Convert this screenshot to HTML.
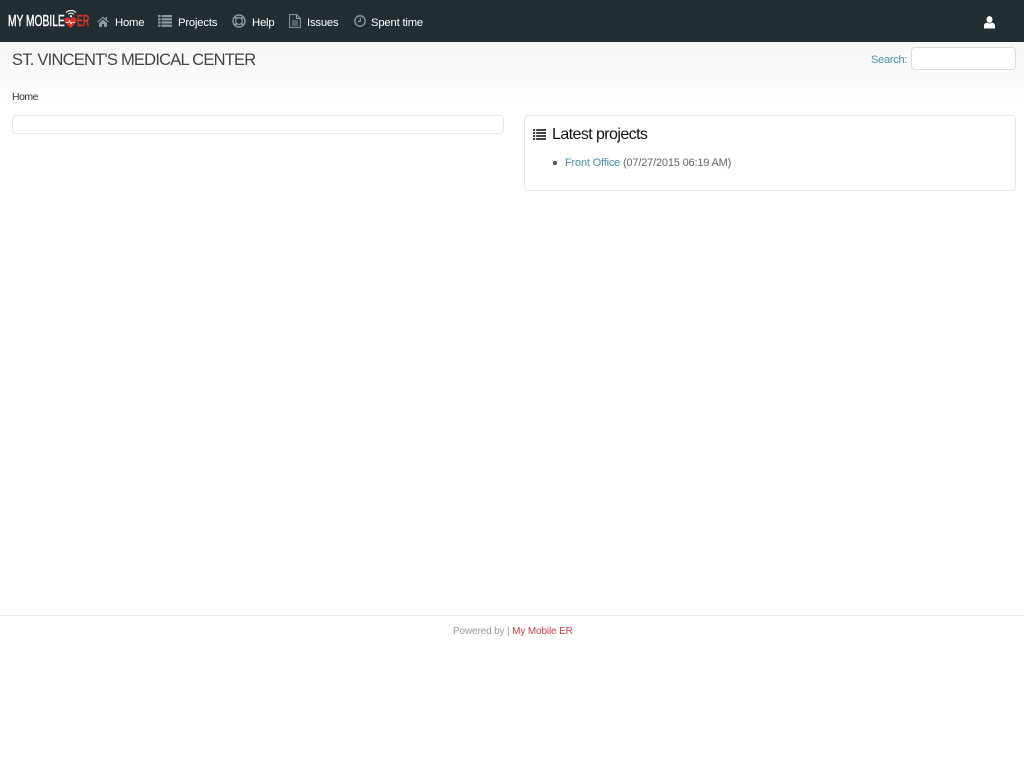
<!DOCTYPE html>
<html><head><meta charset="utf-8"><title>St. Vincent's Medical Center</title>
<style>
html,body{margin:0;padding:0;background:#fff;width:1024px;height:768px;overflow:hidden;font-family:"Liberation Sans",sans-serif;font-size:12px;color:#555}
.a{position:absolute;white-space:nowrap}
#nav{position:absolute;left:0;top:0;width:1024px;height:42px;background:#222e32}
#hd{position:absolute;left:0;top:42px;width:1024px;height:58px;background:linear-gradient(#f8f8f8,#fafafa 60%,#fff)}
.m{color:#fff;font-size:11.3px;top:16px;line-height:14px;letter-spacing:-.2px}
.logo{font-size:16px;line-height:16px;top:14px;transform-origin:0 0;-webkit-text-stroke:.4px currentColor}
svg{position:absolute;overflow:visible}
.box{position:absolute;background:#fff;border:1px solid #e8e8e8;border-radius:4px;box-sizing:border-box}
</style></head><body>
<div id="nav"></div>
<div id="hd"></div>

<div class="a logo" style="left:8px;color:#fff;transform:scaleX(.64)">MY MOBILE</div>
<div class="a logo" style="left:77px;color:#e0352b;transform:scaleX(.55);-webkit-text-stroke:.6px #e0352b">ER</div>
<svg style="left:64px;top:16px" width="13" height="13" viewBox="0 0 14 13"><path d="M7 12.500L1 6.500C-.5 4.500 .8 1 3.600 1 5.200 1 6.400 1.800 7 3 7.600 1.800 8.800 1 10.400 1 13.200 1 14.500 4.500 13 6.500Z" fill="#d9342b"/><path d="M2 6.500h3l1-2 1.500 3.500 1-1.500h3" stroke="#fff" stroke-width=".8" fill="none"/></svg>
<svg style="left:65px;top:9px" width="12" height="9" viewBox="0 0 12 9"><path d="M1 3.500C4 .8 8 .8 11 3.500M3 5.300C5 3.700 7 3.700 9 5.300" stroke="#e6e6e6" stroke-width="1.200" fill="none"/><circle cx="6" cy="7.300" r="1.200" fill="#e6e6e6"/></svg>

<svg style="left:97px;top:16px" width="12" height="11" viewBox="0 0 12 11"><path d="M0 5.800L6 .5 8.500 2.700V1h1.500v3L12 5.800 11.300 6.500 6 2 .7 6.500ZM2 7L6 3.400 10 7v4H7V8H5v3H2Z" fill="#8b9a9c"/></svg>
<div class="a m" style="left:115px">Home</div>

<svg style="left:158px;top:15px" width="14" height="12" viewBox="0 0 14 12" fill="#8b9a9c"><rect x="0" y="0" width="2.500" height="2.200"/><rect x="3.500" y="0" width="10.500" height="2.200"/><rect x="0" y="3.200" width="2.500" height="2.200"/><rect x="3.500" y="3.200" width="10.500" height="2.200"/><rect x="0" y="6.400" width="2.500" height="2.200"/><rect x="3.500" y="6.400" width="10.500" height="2.200"/><rect x="0" y="9.600" width="2.500" height="2.200"/><rect x="3.500" y="9.600" width="10.500" height="2.200"/></svg>
<div class="a m" style="left:178px">Projects</div>

<svg style="left:232px;top:14px" width="14" height="14" viewBox="0 0 14 14" fill="none" stroke="#8b9a9c"><circle cx="7" cy="7" r="6" stroke-width="1.400"/><circle cx="7" cy="7" r="3.400" stroke-width="1.200"/><path d="M3 3l2 2M11 3L9 5M3 11l2-2M11 11L9 9" stroke-width="1.600"/></svg>
<div class="a m" style="left:252px">Help</div>

<svg style="left:289px;top:14px" width="12" height="14" viewBox="0 0 12 14" fill="none" stroke="#8b9a9c"><path d="M.6.600H7.500L11.400 4.500V13.400H.6Z"/><path d="M7.500.600V4.500H11.400M3 7h6M3 9h6M3 11h6"/></svg>
<div class="a m" style="left:307px">Issues</div>

<svg style="left:354px;top:15px" width="12" height="12" viewBox="0 0 12 12" fill="none" stroke="#8b9a9c"><circle cx="6" cy="6" r="5.200" stroke-width="1.300"/><path d="M6.300 2.800V6.400H3.800" stroke-width="1.100"/></svg>
<div class="a m" style="left:371px">Spent time</div>

<svg style="left:984px;top:16px" width="11" height="13" viewBox="0 0 11 13" fill="#fff"><ellipse cx="5.500" cy="3.500" rx="3" ry="3.400"/><path d="M0 12.500V9.500C0 8 1.500 6.800 3 6.600 4.500 7.600 6.500 7.600 8 6.600 9.500 6.800 11 8 11 9.500V12.500Z"/></svg>

<div class="a" style="left:12px;top:50px;font-size:16.500px;line-height:20px;color:#444;letter-spacing:-.76px">ST. VINCENT'S MEDICAL CENTER</div>
<div class="a" style="left:871px;top:53px;font-size:11px;line-height:14px;color:#4e8fa5;letter-spacing:-.25px">Search:</div>
<div class="box" style="left:911px;top:47px;width:105px;height:23px;border-color:#ddd"></div>
<div class="a" style="left:12px;top:90px;font-size:10.500px;line-height:14px;color:#333;letter-spacing:-.5px">Home</div>

<div class="box" style="left:12px;top:115px;width:492px;height:19px"></div>
<div class="box" style="left:524px;top:115px;width:492px;height:76px"></div>
<svg style="left:533px;top:129px" width="13" height="11" viewBox="0 0 13 11" fill="#444"><rect x="0" y="0" width="2.200" height="2"/><rect x="3.200" y="0" width="9.800" height="2"/><rect x="0" y="3" width="2.200" height="2"/><rect x="3.200" y="3" width="9.800" height="2"/><rect x="0" y="6" width="2.200" height="2"/><rect x="3.200" y="6" width="9.800" height="2"/><rect x="0" y="9" width="2.200" height="2"/><rect x="3.200" y="9" width="9.800" height="2"/></svg>
<div class="a" style="left:552px;top:125px;font-size:16px;line-height:20px;color:#111;letter-spacing:-.58px">Latest projects</div>
<div class="a" style="left:553px;top:161px;width:3.500px;height:3.500px;border-radius:50%;background:#555"></div>
<div class="a" style="left:565px;top:156px;font-size:11px;line-height:14px;letter-spacing:-.18px;color:#666"><span style="color:#4e8fa5">Front Office</span> (07/27/2015 06:19 AM)</div>

<div class="a" style="left:0;top:615px;width:1024px;height:1px;background:#eee"></div>
<div class="a" style="left:453px;top:625px;font-size:10px;line-height:14px;letter-spacing:-.14px;color:#999">Powered by | <span style="color:#c9404f">My Mobile ER</span></div>
</body></html>
